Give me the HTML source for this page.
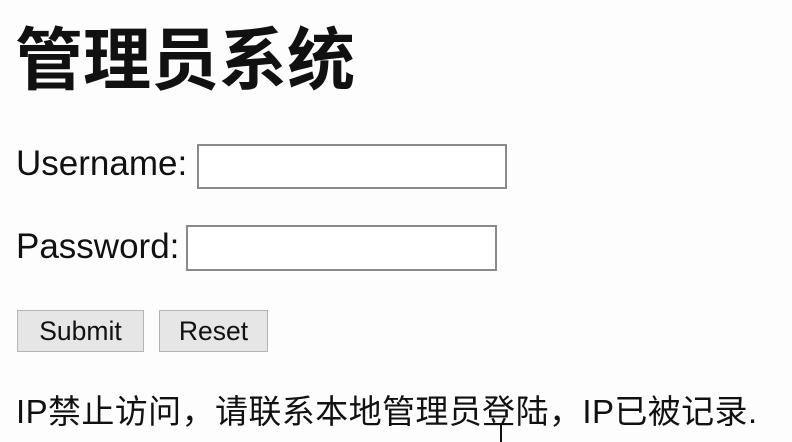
<!DOCTYPE html>
<html><head><meta charset="utf-8"><style>
html,body{margin:0;padding:0;background:#fdfdfd;width:792px;height:442px;overflow:hidden;position:relative;font-family:"Liberation Sans","Noto Sans CJK SC",sans-serif;color:#111}
.a{position:absolute;white-space:nowrap}
h1{position:absolute;margin:0;left:15px;top:15px;font-size:68px;font-weight:bold;line-height:80px;font-family:"Noto Sans CJK SC",sans-serif;letter-spacing:0px}
.lbl{font-size:35px;line-height:40px}
.inp{position:absolute;border:2px solid #8a8a8a;background:#fff;box-sizing:border-box}
.btn{position:absolute;border:1.5px solid #b4b4b4;background:#e6e6e6;box-sizing:border-box;font-size:26.5px;text-align:center;line-height:40px;color:#111}
.msg{font-size:33px;line-height:40px;letter-spacing:0.4px}
</style></head><body>
<h1>管理员系统</h1>
<div class="a lbl" style="left:16px;top:144px">Username:</div>
<div class="inp" style="left:197px;top:144px;width:310px;height:45px"></div>
<div class="a lbl" style="left:16px;top:227px">Password:</div>
<div class="inp" style="left:186px;top:225px;width:311px;height:46px"></div>
<div class="btn" style="left:17px;top:310px;width:127px;height:42px">Submit</div>
<div class="btn" style="left:159px;top:310px;width:109px;height:42px">Reset</div>
<div class="a msg" style="left:16px;top:392px">IP禁止访问，请联系本地管理员登陆，IP已被记录.</div>
<div class="a" style="left:500px;top:425px;width:2px;height:17px;background:#111"></div>
</body></html>
